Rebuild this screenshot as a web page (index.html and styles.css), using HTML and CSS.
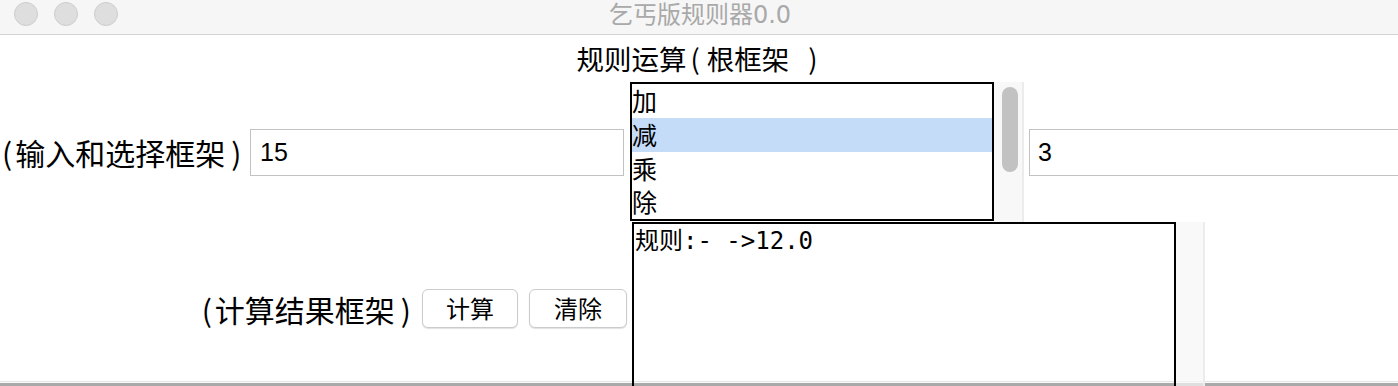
FILE: index.html
```html
<!DOCTYPE html>
<html lang="zh-CN">
<head>
<meta charset="utf-8">
<title>乞丐版规则器0.0</title>
<link rel="stylesheet" href="styles.css">
</head>
<body>
<div class="window">
  <header class="titlebar">
    <div class="lights">
      <span class="light"></span>
      <span class="light"></span>
      <span class="light"></span>
    </div>
    <div class="title">乞丐版规则器0.0</div>
    <div class="spacer"></div>
  </header>
  <main class="app">
    <h1 class="heading">规则运算<span class="po">(</span>根框架<span class="pc">)</span></h1>
    <section class="row row-input">
      <div class="label label-input"><span class="po">(</span>输入和选择框架<span class="pc">)</span></div>
      <input class="field field-a" type="text" value="15">
      <div class="listpane">
        <ul class="list">
          <li class="item">加</li>
          <li class="item selected">减</li>
          <li class="item">乘</li>
          <li class="item">除</li>
        </ul>
        <div class="track"><div class="thumb"></div></div>
      </div>
      <input class="field field-b" type="text" value="3">
    </section>
    <section class="row row-result">
      <div class="label label-result"><span class="po">(</span>计算结果框架<span class="pc">)</span></div>
      <button class="btn btn-calc" type="button">计算</button>
      <button class="btn btn-clear" type="button">清除</button>
      <div class="resultpane">
        <div class="output">规则:- -&gt;12.0</div>
        <div class="track track-out"></div>
      </div>
    </section>
  </main>
</div>
</body>
</html>
```
FILE: styles.css
```css
* { box-sizing: border-box; }

html, body {
  margin: 0;
  padding: 0;
}

body {
  width: 1398px;
  height: 386px;
  overflow: hidden;
  background: #fff;
  font-family: "Noto Sans CJK SC", "Liberation Sans", sans-serif;
  color: #000;
}

.window {
  display: flex;
  flex-direction: column;
  height: 386px;
}

.titlebar {
  display: grid;
  grid-template-columns: 1fr auto 1fr;
  align-items: start;
  height: 35px;
  flex: none;
  background: #f6f6f6;
  border-bottom: 1px solid #d3d3d3;
}

.lights {
  display: flex;
  gap: 16px;
  padding-left: 14px;
  padding-top: 2px;
}

.light {
  width: 24px;
  height: 24px;
  border-radius: 50%;
  background: #dedede;
  border: 1px solid #cdcdcd;
}

.title {
  font-family: "DejaVu Sans", "Noto Sans CJK SC", sans-serif;
  font-size: 24px;
  line-height: 26px;
  color: #a9a9a9;
  padding-top: 2px;
  padding-left: 2px;
}

.app {
  flex: 1;
  display: flex;
  flex-direction: column;
  overflow: hidden;
  background: linear-gradient(to bottom,
    #fff 0, #fff calc(100% - 5px),
    #e6e6e6 calc(100% - 5px), #e6e6e6 calc(100% - 4px),
    #fafafa calc(100% - 4px), #fafafa calc(100% - 3px),
    #a9a9a9 calc(100% - 3px), #a9a9a9 100%);
}

.heading {
  margin: 0;
  height: 47px;
  flex: none;
  display: flex;
  align-items: center;
  justify-content: center;
  font-size: 27.5px;
  font-weight: normal;
  padding-bottom: 2px;
  white-space: pre;
}

.heading .po {
  margin: 0 7px 0 4px;
}

.heading .pc {
  margin: 0 4px 0 19px;
}

.row {
  display: flex;
  flex: none;
  overflow: hidden;
}

.row > * {
  flex: none;
}

.row-input {
  height: 140px;
  align-items: center;
}

.label {
  font-size: 30px;
  line-height: 32px;
  text-align: right;
  white-space: nowrap;
}

.label .po {
  margin: 0 3px 0 2px;
}

.label .pc {
  margin: 0 0 0 6px;
}

.label-input {
  width: 241px;
  margin-right: 9px;
}

.field {
  height: 47px;
  border: 1px solid #c2c2c2;
  border-radius: 0;
  padding: 0 0 0 9px;
  font-family: "Liberation Sans", "Noto Sans CJK SC", sans-serif;
  font-size: 25px;
  color: #000;
  background: #fff;
  outline: none;
}

.field-a {
  width: 374px;
  margin-right: 6px;
}

.field-b {
  width: 400px;
  margin-left: 5px;
  padding-left: 8px;
}

.listpane {
  display: flex;
  align-self: stretch;
  width: 394px;
}

.list {
  list-style: none;
  margin: 0;
  padding: 0;
  width: 364px;
  height: 139px;
  border: 2px solid #000;
  background: #fff;
}

.item {
  height: 33.75px;
  line-height: 33px;
  font-size: 25px;
  padding-left: 0;
}

.item.selected {
  background: #c4dcf8;
}

.track {
  width: 30px;
  background: #f8f8f8;
  border-right: 2px solid #ececec;
  display: flex;
  justify-content: center;
  padding-top: 5px;
  padding-left: 4px;
}

.thumb {
  width: 16px;
  height: 85px;
  border-radius: 8px;
  background: #c2c2c2;
}

.row-result {
  height: 173px;
  align-items: center;
}

.label-result {
  width: 411px;
  margin-right: 11px;
}

.btn {
  height: 39px;
  border: 1px solid #cbcbcb;
  border-radius: 6px;
  background: #fff;
  box-shadow: 0 1px 1px rgba(0, 0, 0, 0.12);
  font-family: "Noto Sans CJK SC", sans-serif;
  font-size: 24px;
  line-height: 30px;
  padding: 0 0 2px;
  color: #000;
}

.btn-calc {
  width: 96px;
  margin-right: 11px;
}

.btn-clear {
  width: 98px;
  margin-right: 5px;
}

.resultpane {
  display: flex;
  align-self: stretch;
}

.output {
  width: 544px;
  border: 2px solid #000;
  padding: 2px 0 0 1px;
  font-family: "DejaVu Sans Mono", "Noto Sans CJK SC", monospace;
  font-size: 24px;
  line-height: 30px;
  white-space: pre;
}

.track-out {
  width: 29px;
  padding: 0;
  border-right: 2px solid #ececec;
  background: rgba(246, 246, 246, 0.7);
}
```
